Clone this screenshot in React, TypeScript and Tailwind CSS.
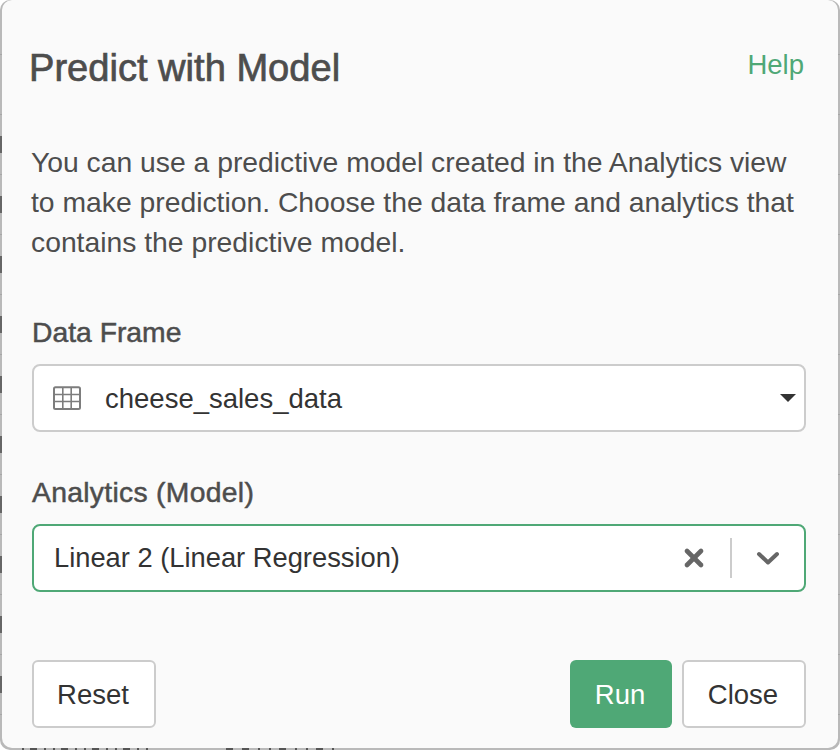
import React from "react";
import { X } from "lucide-react";

const font = "font-['Liberation_Sans',Arial,sans-serif]";

// tops of the table text that stick out under the dialog: [width, gap before]
const ticks = [
  [2, 22], [7, 6], [2, 7], [2, 7], [7, 6], [2, 7], [2, 7], [7, 6], [2, 7], [2, 7], [7, 6], [2, 7], [2, 7],
  [7, 78], [7, 9], [2, 9], [2, 9], [7, 8], [2, 9], [2, 9], [7, 8], [2, 9],
];

function GridIcon() {
  return (
    <svg width="28" height="24" viewBox="0 0 28 24" fill="none" stroke="#7d7d7d" strokeWidth="1.6">
      <rect x="1" y="1.2" width="26" height="21.8" rx="1.5" strokeWidth="2" />
      <path d="M1 8.5h26M1 15.5h26M9.8 1v22M18.2 1v22" />
    </svg>
  );
}

function Button({ label, primary }: { label: string; primary?: boolean }) {
  return (
    <button
      className={
        primary
          ? "h-[68px] w-[102px] rounded-[6px] bg-[#4fa876] pr-[2px] pt-[2px] text-[27.5px] text-white"
          : "h-[68px] w-[124px] rounded-[6px] border-2 border-[#cccccc] bg-white pr-[2px] pt-[2px] text-[27.5px] text-[#333333]"
      }
    >
      {label}
    </button>
  );
}

export default function App() {
  return (
    <div className={`${font} relative h-[750px] w-[840px] overflow-hidden bg-white`}>
      <div className="relative h-full w-full overflow-hidden rounded-[10px] bg-[#b9b9b9]">
        {/* table rows showing behind the dialog */}
        <div className="flex flex-col">
          <div className="h-[55px] shrink-0 border-b border-[#a6a6a6]" />
          {[...Array(11)].map((_, i) => (
            <div key={i} className="flex h-[60px] shrink-0 items-center border-b border-[#a6a6a6]">
              {i > 0 && <span className="h-[17px] w-[1.5px] bg-[#666666]" />}
            </div>
          ))}
        </div>
        <div className="absolute bottom-0 left-0 flex h-[2px]">
          {ticks.map(([w, gap], i) => (
            <span key={i} className="h-full bg-[#555555]" style={{ width: w, marginLeft: gap }} />
          ))}
        </div>

        <div className="absolute bottom-[2px] left-[2px] right-[2px] top-0 flex flex-col rounded-[10px] bg-[#fafafa] pl-[30px] pr-[32px]">
          <div className="flex items-start justify-between pt-[45px]">
            <h4 className="ml-[-3px] text-[38.1px] font-medium leading-[46px] text-[#4d4d4d] [-webkit-text-stroke:0.7px_#4d4d4d]">
              Predict with Model
            </h4>
            <a className="mr-[2px] text-[27.5px] leading-[40px] text-[#4fa876]">Help</a>
          </div>

          <p className="ml-[-1px] mt-[51px] text-[28.3px] leading-[40px] text-[#4d4d4d]">
            You can use a predictive model created in the Analytics view to make prediction. Choose the data frame and
            analytics that contains the predictive model.
          </p>

          <label className="mt-[50px] text-[28.3px] leading-[40px] text-[#4d4d4d] [-webkit-text-stroke:0.5px_#4d4d4d]">
            Data Frame
          </label>
          <div className="mt-[12px] flex h-[68px] items-center rounded-[8px] border-2 border-[#cccccc] bg-white pl-[19px] pr-[8px]">
            <GridIcon />
            <span className="ml-[24px] flex-1 pt-[2px] text-[27.5px] text-[#333333]">cheese_sales_data</span>
            <span className="h-0 w-0 border-x-[8px] border-t-[8px] border-x-transparent border-t-[#333333]" />
          </div>

          <label className="mt-[40px] text-[28.3px] leading-[40px] tracking-[0.3px] text-[#4d4d4d] [-webkit-text-stroke:0.5px_#4d4d4d]">
            Analytics (Model)
          </label>
          <div className="mt-[12px] flex h-[68px] items-center rounded-[8px] border-2 border-[#4fa876] bg-white pl-[20px] pr-[24px]">
            <span className="flex-1 text-[27.3px] text-[#333333]">Linear 2 (Linear Regression)</span>
            <X className="h-[28px] w-[28px] text-[#666666]" strokeWidth={4} />
            <span className="ml-[22px] mr-[24px] h-[40px] w-[2px] bg-[#cccccc]" />
            <svg width="24" height="16" viewBox="0 0 24 16" fill="none" stroke="#666666" strokeWidth="4" strokeLinecap="round" strokeLinejoin="round">
              <path d="M3 4l9 8.5L21 4" />
            </svg>
          </div>

          <div className="mt-[68px] flex items-center justify-between">
            <Button label="Reset" />
            <div className="flex gap-[10px]">
              <Button label="Run" primary />
              <Button label="Close" />
            </div>
          </div>
        </div>
      </div>
    </div>
  );
}
